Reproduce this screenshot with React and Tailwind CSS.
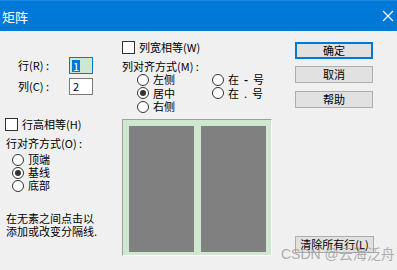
import React from 'react'

function Radio({ checked }) {
  return (
    <span className="w-[12px] h-[12px] rounded-full border border-[#333] bg-white flex items-center justify-center shrink-0">
      {checked && <span className="w-[6px] h-[6px] rounded-full bg-[#333]" />}
    </span>
  )
}

function Check() {
  return <span className="w-[13px] h-[13px] border border-[#333] bg-white shrink-0" />
}

function Btn({ children, primary, w = 'w-[78px]' }) {
  return (
    <div className={`${w} h-[17px] bg-[#e1e1e1] flex items-center justify-center ${primary ? 'border-2 border-[#0078d7]' : 'border border-[#adadad]'}`}>
      {children}
    </div>
  )
}

export default function App(){
  return (
    <div className="w-[397px] h-[270px] flex flex-col text-[11px] leading-[13px] text-black font-['Noto_Sans_CJK_SC',sans-serif] relative overflow-hidden whitespace-pre">
      <div className="h-[31px] bg-[#0078d7] border-t border-[#1a88e0] flex items-center justify-between pl-[2px] pr-[3px] text-white">
        <span className="text-[13px]">矩阵</span>
        <svg width="12" height="12" viewBox="0 0 12 12" stroke="white" strokeWidth="1.2">
          <path d="M1 1 L11 11 M11 1 L1 11" />
        </svg>
      </div>

      <div className="flex-1 bg-[#f0f0f0] flex">
        {/* left */}
        <div className="w-[116px] pt-[26px] flex flex-col">
          <div className="flex items-center h-[17px]">
            <span className="w-[69px] pl-[18px]">行(R) :</span>
            <div className="w-[24px] h-[17px] border border-[#0078d7] bg-[#cde8cf] flex items-center pl-[2px]">
              <span className="bg-[#0078d7] text-white px-[1px] leading-[12px]">1</span>
            </div>
          </div>
          <div className="flex items-center h-[17px] mt-[4px]">
            <span className="w-[69px] pl-[18px]">列(C) :</span>
            <div className="w-[24px] h-[17px] border border-[#7a7a7a] bg-white flex items-center pl-[3px]">2</div>
          </div>
          <div className="flex items-center gap-[4px] pl-[5px] mt-[23px] h-[13px]">
            <Check />
            <span>行高相等(H)</span>
          </div>
          <div className="pl-[6px] mt-[6px]">行对齐方式(O) :</div>
          <div className="flex flex-col pl-[12px] mt-[3px]">
            <div className="flex items-center gap-[4px] h-[13px]"><Radio /><span>顶端</span></div>
            <div className="flex items-center gap-[4px] h-[13px]"><Radio checked /><span>基线</span></div>
            <div className="flex items-center gap-[4px] h-[13px]"><Radio /><span>底部</span></div>
          </div>
          <div className="pl-[6px] mt-[20px]">
            <div>在无素之间点击以</div>
            <div>添加或改变分隔线.</div>
          </div>
        </div>

        {/* middle */}
        <div className="w-[164px] pt-[10px] pl-[6px] flex flex-col">
          <div className="flex items-center gap-[4px] h-[13px]">
            <Check />
            <span>列宽相等(W)</span>
          </div>
          <div className="mt-[6px]">列对齐方式(M) :</div>
          <div className="grid grid-cols-[75px_1fr] pl-[15px]">
            <div className="flex items-center gap-[4px] h-[13px]"><Radio /><span>左侧</span></div>
            <div className="flex items-center gap-[4px] h-[13px]"><Radio /><span>在  <b>-</b>  号</span></div>
            <div className="flex items-center gap-[4px] h-[14px]"><Radio checked /><span>居中</span></div>
            <div className="flex items-center gap-[4px] h-[14px]"><Radio /><span>在  .  号</span></div>
            <div className="flex items-center gap-[4px] h-[13px]"><Radio /><span>右侧</span></div>
          </div>
          <div className="mt-[6px] w-[150px] h-[137px] border border-t-[#a0a0a0] border-l-[#a0a0a0] border-b-white border-r-white bg-[#cde8cf] flex gap-[7px] pt-[6px] pl-[6px] pr-[5px] pb-[3px]">
            <div className="flex-1 bg-[#808080]" />
            <div className="flex-1 bg-[#808080]" />
          </div>
        </div>

        {/* right */}
        <div className="flex-1 pl-[15px] pt-[11px] pb-[17px] flex flex-col">
          <Btn primary>确定</Btn>
          <div className="mt-[7px]"><Btn>取消</Btn></div>
          <div className="mt-[8px]"><Btn>帮助</Btn></div>
          <div className="mt-auto"><Btn w="w-[79px]">清除所有行(L)</Btn></div>
        </div>
      </div>

      <div className="absolute left-[281px] top-[246px] text-[14px] leading-[16px] text-[#9a9a9a]/80 font-['Liberation_Sans','Noto_Sans_CJK_SC',sans-serif]">
        CSDN @云海泛舟
      </div>
    </div>
  )
}
